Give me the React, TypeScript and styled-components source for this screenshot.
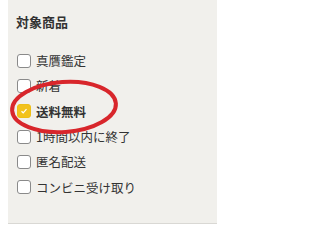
import React from "react";
import styled, {createGlobalStyle} from "styled-components";

const GlobalStyle = createGlobalStyle`
  html, body {
    margin: 0;
    padding: 0;
    background: #ffffff;
  }
  body {
    font-family: "Noto Sans CJK JP", "Noto Sans", sans-serif;
  }
`

const items = [
	{label: "真贋鑑定", checked: false},
	{label: "新着", checked: false},
	{label: "送料無料", checked: true},
	{label: "1時間以内に終了", checked: false},
	{label: "匿名配送", checked: false},
	{label: "コンビニ受け取り", checked: false},
]

const App = () => {
	return (
		<>
			<GlobalStyle/>
			<Panel>
				<Title>対象商品</Title>
				<List>
					{items.map((item) => (
						<Row key={item.label}>
							<Box $checked={item.checked}>
								{item.checked && (
									<svg width="8" height="8" viewBox="0 0 8 8">
										<path d="M1.5 4.2 L3.2 5.8 L6.5 2.2" fill="none" stroke="#fff" strokeWidth="1.2"/>
									</svg>
								)}
							</Box>
							<Label $checked={item.checked}>{item.label}</Label>
						</Row>
					))}
				</List>
				{/* red marker ring drawn over the screenshot */}
				<Ring width="222" height="227" viewBox="0 0 222 227">
					<ellipse cx="64" cy="107" rx="52" ry="25" fill="none" stroke="#d8262b" strokeWidth="4"
					         transform="rotate(-4 64 107)"/>
				</Ring>
			</Panel>
		</>
	)
}

export default App

const Panel = styled.div`
  position: relative;
  margin-left: 8px;
  width: 209px;
  height: 224px;
  box-sizing: border-box;
  background: #f1f0ec;
  border-bottom: 1px solid #d9d8d4;
  padding: 13px 0 0 8px;
`

const Title = styled.h2`
  margin: 0;
  font-size: 13px;
  font-weight: 700;
  color: #333;
  line-height: 18px;
`

const List = styled.div`
  display: flex;
  flex-direction: column;
  margin-top: 17px;
  margin-left: 1px;
`

const Row = styled.div`
  display: flex;
  align-items: center;
  gap: 5px;
  height: 25.3px;
`

const Box = styled.span<{$checked: boolean}>`
  display: flex;
  align-items: center;
  justify-content: center;
  width: 14px;
  height: 14px;
  box-sizing: border-box;
  border-radius: 3px;
  border: 1px solid ${({$checked}) => $checked ? "#eebf16" : "#8a8a8a"};
  background: ${({$checked}) => $checked ? "#f2c21c" : "#fff"};
`

const Label = styled.span<{$checked: boolean}>`
  font-size: 12.5px;
  color: #333;
  font-weight: ${({$checked}) => $checked ? 700 : 400};
  white-space: nowrap;
`

const Ring = styled.svg`
  position: absolute;
  left: -8px;
  top: 0;
  pointer-events: none;
`
